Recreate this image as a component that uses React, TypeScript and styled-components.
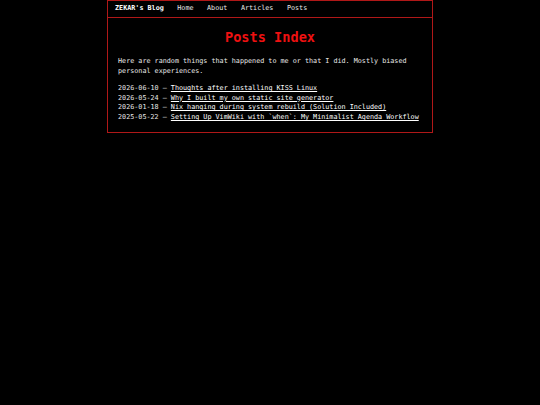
import * as React from 'react';
import styled, { createGlobalStyle } from 'styled-components';

const GlobalStyle = createGlobalStyle`
  html, body {
    margin: 0;
    padding: 0;
    background: #000;
    color: #e8e8e8;
    font-family: "DejaVu Sans Mono", "Liberation Mono", monospace;
    font-size: 6.75px;
    line-height: 1.45;
  }
`;

const Page = styled.div`
  width: 326px;
  margin: 0 auto;
  border: 1px solid #b01818;
  box-sizing: border-box;
`;

const Nav = styled.nav`
  display: flex;
  align-items: center;
  gap: 13.5px;
  height: 16px;
  padding: 0 7px;
  border-bottom: 1px solid #b01818;
`;

const Brand = styled.a`
  color: #fff;
  font-weight: bold;
  text-decoration: none;
`;

const NavLink = styled.a`
  color: #e8e8e8;
  text-decoration: none;
`;

const Main = styled.main`
  padding: 8px 10px 9px;
`;

const Title = styled.h1`
  margin: 0 0 8px;
  text-align: center;
  color: #ee1111;
  font-size: 13.6px;
  font-weight: bold;
  line-height: 22px;
`;

const Intro = styled.p`
  margin: 0 0 8px;
  line-height: 10px;
`;

const PostList = styled.ul`
  list-style: none;
  margin: 0;
  padding: 0;
`;

const PostItem = styled.li`
  line-height: 9.7px;
  white-space: nowrap;
`;

const PostLink = styled.a`
  color: #fff;
  text-decoration: underline;
`;

const posts = [
  { date: '2026-06-10', title: 'Thoughts after installing KISS Linux' },
  { date: '2026-05-24', title: 'Why I built my own static site generator' },
  { date: '2026-01-18', title: 'Nix hanging during system rebuild (Solution Included)' },
  { date: '2025-05-22', title: 'Setting Up VimWiki with `when`: My Minimalist Agenda Workflow' },
];

export default function App() {
  return (
    <>
      <GlobalStyle />
      <Page>
        <Nav>
          <Brand href="#">ZEKAR's Blog</Brand>
          <NavLink href="#">Home</NavLink>
          <NavLink href="#">About</NavLink>
          <NavLink href="#">Articles</NavLink>
          <NavLink href="#">Posts</NavLink>
        </Nav>
        <Main>
          <Title>Posts Index</Title>
          <Intro>
            Here are random things that happened to me or that I did. Mostly biased personal
            experiences.
          </Intro>
          <PostList>
            {posts.map((p) => (
              <PostItem key={p.date}>
                {p.date} — <PostLink href="#">{p.title}</PostLink>
              </PostItem>
            ))}
          </PostList>
        </Main>
      </Page>
    </>
  );
}
